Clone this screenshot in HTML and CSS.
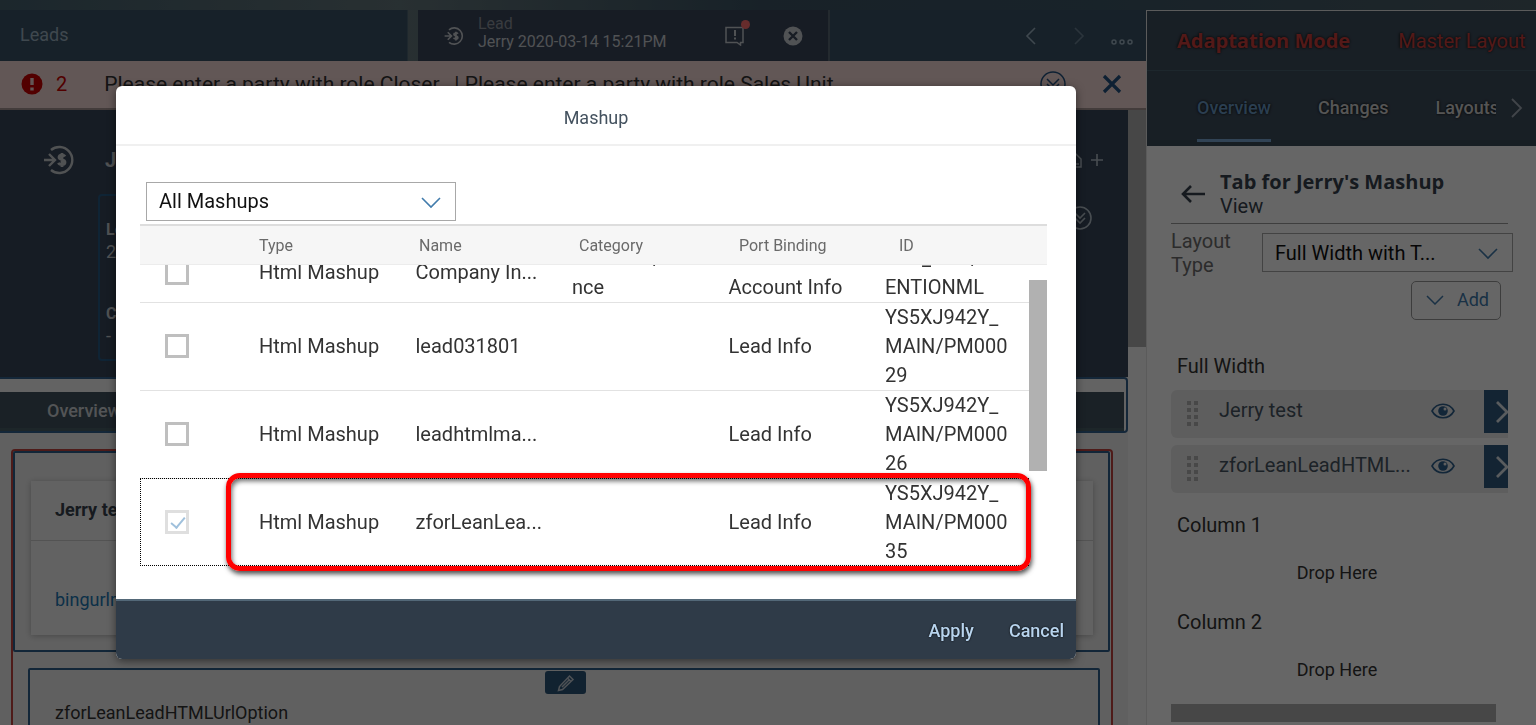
FILE: index.html
```html
<!DOCTYPE html>
<html lang="en">
<head>
  <meta charset="UTF-8" />
  <meta name="viewport" content="width=device-width, initial-scale=1.0" />
  <title>Lead - Mashup</title>
  <link rel="stylesheet" href="styles.css">
</head>
<body>
  <div class="app">
    <main class="main">
      <nav class="window-tabs">
        <a href="#" class="window-tab">Leads</a>
        <div class="window-tab active">
          <svg class="lead-icon" width="20" height="20" viewBox="0 0 32 32" fill="none" stroke="currentColor" stroke-width="2.600"><path d="M8 6a13 13 0 1 1 0 20M1 16h11M6 10l6 6-6 6"/><path d="M22 12.500c-1-2-6-2-6 .8 0 3 6 1.800 6 5 0 3-5.500 3-6.500.5M19 9v14" stroke-width="3"/></svg>
          <div class="tab-text">
            <span class="tab-kind">Lead</span>
            <span class="tab-name">Jerry 2020-03-14 15:21PM</span>
          </div>
          <button type="button" class="icon-btn message-btn" aria-label="Messages">
            <svg width="20" height="20" viewBox="0 0 20 20" fill="none" stroke="currentColor" stroke-width="1.500"><path d="M1 1.500h17v15h-2.500v2.500l-3.500-2.500H1z"/><path d="M10 4v6M10 11.500v2" stroke-width="2"/></svg>
            <span class="dot"></span>
          </button>
          <button type="button" class="icon-btn" aria-label="Close tab">
            <svg width="20" height="20" viewBox="0 0 20 20"><circle cx="10" cy="10" r="9.500" fill="currentColor"/><path d="M6 6l8 8M14 6l-8 8" stroke="#3a465a" stroke-width="2.400"/></svg>
          </button>
        </div>
        <div class="window-nav">
          <button type="button" class="icon-btn" aria-label="Previous">
            <svg width="12" height="18" viewBox="0 0 12 18" fill="none" stroke="currentColor" stroke-width="1.600"><path d="M10 1L2 9l8 8"/></svg>
          </button>
          <button type="button" class="icon-btn faded" aria-label="Next">
            <svg width="12" height="18" viewBox="0 0 12 18" fill="none" stroke="currentColor" stroke-width="1.600"><path d="M2 1l8 8-8 8"/></svg>
          </button>
          <button type="button" class="icon-btn more-btn" aria-label="More">
            <svg width="22" height="6" viewBox="0 0 22 6" fill="none" stroke="currentColor" stroke-width="1.500"><circle cx="3" cy="3" r="2"/><circle cx="11" cy="3" r="2"/><circle cx="19" cy="3" r="2"/></svg>
          </button>
        </div>
      </nav>

      <div class="error-bar">
        <svg width="22" height="22" viewBox="0 0 22 22"><circle cx="11" cy="11" r="10.500" fill="#cc0000"/><path d="M11 5v7M11 14.500v3" stroke="#f5dad7" stroke-width="3.400"/></svg>
        <span class="error-count">2</span>
        <span class="error-text">Please enter a party with role Closer.&nbsp; | Please enter a party with role Sales Unit</span>
        <button type="button" class="icon-btn" aria-label="Expand">
          <svg width="26" height="26" viewBox="0 0 26 26" fill="none" stroke="currentColor" stroke-width="1.500"><circle cx="13" cy="13" r="12"/><path d="M7 8l6 6 6-6M7 13l6 6 6-6"/></svg>
        </button>
        <button type="button" class="icon-btn" aria-label="Dismiss">
          <svg width="20" height="20" viewBox="0 0 20 20" stroke="currentColor" stroke-width="3.200"><path d="M2 2l16 16M18 2L2 18"/></svg>
        </button>
      </div>

      <div class="work-area">
        <div class="page">
          <section class="object-header">
            <div class="object-title">
              <svg width="32" height="32" viewBox="0 0 32 32" fill="none" stroke="currentColor" stroke-width="2.400"><path d="M8 6a13 13 0 1 1 0 20M1 16h11M6 10l6 6-6 6"/><path d="M22 12.500c-1-2-6-2-6 .8 0 3 6 1.800 6 5 0 3-5.500 3-6.500.5M19 9v14" stroke-width="2.800"/></svg>
              <h1>Jerry 2020-03-14 15:21PM</h1>
              <div class="object-actions">
                <svg width="18" height="18" viewBox="0 0 18 18" fill="none" stroke="currentColor" stroke-width="1.500"><path d="M3 16V8l6-6 6 6v8zM9 13h4"/></svg>
                <svg width="14" height="14" viewBox="0 0 14 14" stroke="currentColor" stroke-width="1.600"><path d="M7 1v12M1 7h12"/></svg>
              </div>
            </div>
            <div class="object-row">
              <dl class="facets">
                <dt>Lead ID</dt>
                <dd>2641</dd>
                <dt>Closer</dt>
                <dd>-</dd>
              </dl>
              <svg class="expand-icon" width="24" height="24" viewBox="0 0 24 24" fill="none" stroke="currentColor" stroke-width="1.600"><circle cx="12" cy="12" r="11"/><path d="M7 7l5 5 5-5M7 12l5 5 5-5"/></svg>
            </div>
          </section>

          <div class="section-nav">
            <a href="#">Overview</a>
          </div>

          <div class="tab-content">
            <div class="drop-zone">
              <article class="card">
                <h2>Jerry test</h2>
                <a href="#">bingurlmashup</a>
              </article>
            </div>
            <div class="drop-zone second">
              <button type="button" class="edit-btn" aria-label="Edit">
                <svg width="18" height="18" viewBox="0 0 18 18" fill="none" stroke="currentColor" stroke-width="1.500"><path d="M1.500 16.500l1-4L12.500 2l3.500 3.500L5.500 15.500zM10.500 4l3.500 3.500M5 13l7-7"/></svg>
              </button>
              <p>zforLeanLeadHTMLUrlOption</p>
            </div>
          </div>
        </div>
        <div class="page-scroll"><div class="page-thumb"></div></div>
      </div>
    </main>

    <aside class="panel">
      <div class="panel-mode">
        <strong>Adaptation Mode</strong>
        <span>Master Layout</span>
      </div>
      <nav class="panel-tabs">
        <a href="#" class="selected">Overview</a>
        <a href="#">Changes</a>
        <a href="#" class="cut">Layouts</a>
        <svg width="12" height="20" viewBox="0 0 12 20" fill="none" stroke="currentColor" stroke-width="1.800"><path d="M1 1l9 9-9 9"/></svg>
      </nav>
      <div class="panel-body">
        <div class="panel-title">
          <svg width="24" height="20" viewBox="0 0 24 20" fill="none" stroke="currentColor" stroke-width="2.600"><path d="M10 2l-8 8 8 8M2 10h22"/></svg>
          <div>
            <h2>Tab for Jerry's Mashup</h2>
            <p>View</p>
          </div>
        </div>
        <div class="layout-type">
          <label for="layoutType">Layout Type</label>
          <div class="select">
            <select id="layoutType"><option>Full Width with T...</option></select>
            <svg width="20" height="12" viewBox="0 0 20 12" fill="none" stroke="currentColor" stroke-width="1.600"><path d="M1 1l9 9 9-9"/></svg>
          </div>
        </div>
        <button type="button" class="add-btn">
          <svg width="18" height="10" viewBox="0 0 18 10" fill="none" stroke="currentColor" stroke-width="1.500"><path d="M1 1l8 8 8-8"/></svg>
          Add
        </button>

        <h3>Full Width</h3>
        <div class="item">
          <svg class="grip" width="12" height="26" viewBox="0 0 12 26" fill="currentColor"><path d="M0 0h4v4H0zM7 0h4v4H7zM0 7h4v4H0zM7 7h4v4H7zM0 14h4v4H0zM7 14h4v4H7zM0 21h4v4H0zM7 21h4v4H7z"/></svg>
          <span>Jerry test</span>
          <svg class="eye" width="24" height="16" viewBox="0 0 24 16"><path d="M1 8c5-9 17-9 22 0-5 9-17 9-22 0z" fill="none" stroke="currentColor" stroke-width="1.600"/><circle cx="12" cy="8" r="4.800" fill="currentColor"/><circle cx="14" cy="6" r="1.500" fill="#ebebeb"/></svg>
          <button type="button" class="item-go" aria-label="Open Jerry test">
            <svg width="12" height="22" viewBox="0 0 12 22" fill="none" stroke="currentColor" stroke-width="2.800"><path d="M1 1l10 10L1 21"/></svg>
          </button>
        </div>
        <div class="item">
          <svg class="grip" width="12" height="26" viewBox="0 0 12 26" fill="currentColor"><path d="M0 0h4v4H0zM7 0h4v4H7zM0 7h4v4H0zM7 7h4v4H7zM0 14h4v4H0zM7 14h4v4H7zM0 21h4v4H0zM7 21h4v4H7z"/></svg>
          <span>zforLeanLeadHTML...</span>
          <svg class="eye" width="24" height="16" viewBox="0 0 24 16"><path d="M1 8c5-9 17-9 22 0-5 9-17 9-22 0z" fill="none" stroke="currentColor" stroke-width="1.600"/><circle cx="12" cy="8" r="4.800" fill="currentColor"/><circle cx="14" cy="6" r="1.500" fill="#ebebeb"/></svg>
          <button type="button" class="item-go" aria-label="Open zforLeanLeadHTML">
            <svg width="12" height="22" viewBox="0 0 12 22" fill="none" stroke="currentColor" stroke-width="2.800"><path d="M1 1l10 10L1 21"/></svg>
          </button>
        </div>
        <h3>Column 1</h3>
        <p class="drop-here">Drop Here</p>
        <h3>Column 2</h3>
        <p class="drop-here">Drop Here</p>
        <div class="panel-scroll"></div>
      </div>
    </aside>
  </div>

  <div class="backdrop"></div>

  <div class="dialog" role="dialog" aria-labelledby="dialogTitle">
    <h2 class="dialog-title" id="dialogTitle">Mashup</h2>
    <div class="dialog-body">
      <div class="select mashup-filter">
        <select id="mashupFilter" aria-label="Mashup filter"><option>All Mashups</option></select>
        <svg width="20" height="12" viewBox="0 0 20 12" fill="none" stroke="currentColor" stroke-width="1.600"><path d="M1 1l9 9 9-9"/></svg>
      </div>
      <table class="head-table">
        <thead>
          <tr>
            <th class="col-check"></th>
            <th>Type</th>
            <th>Name</th>
            <th>Category</th>
            <th>Port Binding</th>
            <th class="col-id">ID</th>
          </tr>
        </thead>
      </table>
      <div class="rows">
        <div class="rows-view">
          <table class="body-table">
            <colgroup>
              <col class="col-check"><col><col><col><col><col class="col-id">
            </colgroup>
            <tbody>
              <tr>
                <td><input type="checkbox" aria-label="Company In..."></td>
                <td>Html Mashup</td>
                <td>Company In...</td>
                <td>Business/Finance</td>
                <td>Avention Account Info</td>
                <td>BYD_COD/AVENTIONML</td>
              </tr>
              <tr>
                <td><input type="checkbox" aria-label="lead031801"></td>
                <td>Html Mashup</td>
                <td>lead031801</td>
                <td></td>
                <td>Lead Info</td>
                <td>YS5XJ942Y_MAIN/PM00029</td>
              </tr>
              <tr>
                <td><input type="checkbox" aria-label="leadhtmlma..."></td>
                <td>Html Mashup</td>
                <td>leadhtmlma...</td>
                <td></td>
                <td>Lead Info</td>
                <td>YS5XJ942Y_MAIN/PM00026</td>
              </tr>
              <tr class="focused">
                <td><input type="checkbox" aria-label="zforLeanLea..." checked disabled></td>
                <td>Html Mashup</td>
                <td>zforLeanLea...</td>
                <td></td>
                <td>Lead Info</td>
                <td>YS5XJ942Y_MAIN/PM00035</td>
              </tr>
            </tbody>
          </table>
        </div>
        <div class="rows-scroll"><div class="rows-thumb"></div></div>
        <div class="marker"></div>
      </div>
    </div>
    <div class="dialog-footer">
      <button type="button">Apply</button>
      <button type="button">Cancel</button>
    </div>
  </div>
</body>
</html>
```
FILE: styles.css
```css
* { box-sizing: border-box; }
body {
  margin: 0; height: 100vh; overflow: hidden; position: relative;
  font-family: Roboto, "Liberation Sans", sans-serif; font-size: 20px; line-height: 24px; color: #333;
}
h1, h2, h3, p, dl, dd { margin: 0; }
a { text-decoration: none; color: inherit; }
button, select { font: inherit; color: inherit; }
svg { display: block; flex: none; }

.app {
  display: grid; grid-template-columns: 1fr 390px; height: 100%; padding-top: 10px;
  background: linear-gradient(90deg, #46616f 0, #65787d 400px, #3c5464 760px, #3e5768 1100px, #4c5f68 100%);
}
.main { display: flex; flex-direction: column; min-width: 0; min-height: 0; }
.icon-btn { position: relative; border: 0; padding: 0; background: none; cursor: pointer; }

/* window tabs */
.window-tabs { display: flex; height: 51px; flex: none; color: #9fb4c4; }
.window-tab { display: flex; align-items: center; width: 408px; padding: 0 0 2px 20px; font-size: 18px; background: #3a5367; border-right: 1px solid #4d6573; }
.window-tab.active {
  width: 412px; margin-left: 10px; padding: 0 25px 0 26px; background: #3a465a; color: #c8ccd2; border-right: 2px solid #5b6a76;
}
.tab-text { display: flex; flex-direction: column; margin: 0 0 5px 14px; flex: 1; font-size: 16px; line-height: 18px; }
.tab-kind { color: #8e959e; }
.message-btn { margin-right: 38px; }
.dot { position: absolute; top: -6px; right: -5px; width: 9px; height: 9px; border-radius: 50%; background: #ff6f6f; }
.window-nav { flex: 1; display: flex; align-items: center; justify-content: flex-end; padding-right: 13px; gap: 36px; background: #3a5367; }
.window-nav .more-btn { margin: 12px 0 0 -10px; }
.faded { opacity: 0.5; }

/* error bar */
.error-bar {
  display: flex; align-items: center; flex: none; height: 49px; padding: 0 24px 1px 21px;
  background: #f5dad7; border-bottom: 2px solid #a99694; color: #23527f;
}
.error-count { margin-left: 13px; color: #cc0000; }
.error-text { flex: 1; margin-left: 37px; font-size: 21px; color: #333; white-space: nowrap; }
.error-bar .icon-btn + .icon-btn { margin-left: 36px; }

/* page */
.work-area { display: flex; flex: 1; min-height: 0; }
.page { flex: 1; min-width: 0; overflow: hidden; background: #f0f0f0; }
.page-scroll { width: 18px; background: #fafafa; }
.page-thumb { height: 237px; background: #b2b2b2; }
.object-header { height: 267px; padding: 34px 24px 0 43px; background: #38465a; color: #c8ccd0; }
.object-title { display: flex; align-items: center; height: 32px; }
.object-title h1 { flex: 1; margin-left: 30px; font-size: 20px; }
.object-actions { display: flex; align-items: center; gap: 6px; color: #b4c0ca; }
.object-row { display: flex; justify-content: space-between; padding: 18px 12px 0 55px; }
.facets {
  width: 400px; height: 167px; padding: 23px 6px; border: 2px solid #275a85; border-radius: 4px;
  font-size: 18px; line-height: 22px;
}
.facets dt { font-size: 16px; font-weight: bold; }
.facets dd + dt { margin-top: 40px; }
.expand-icon { margin-top: 12px; color: #b4c0ca; }
.section-nav {
  padding: 13px 2px 0 0; background: #f8f8f8; border: 2px solid #33628e; border-left: 0; border-radius: 0 4px 4px 0;
  font-size: 18px; font-weight: 500; color: #cfd3d6;
}
.section-nav a { display: block; height: 39px; padding: 7px 47px 0; background: #41535f; border-bottom: 3px solid #4a5f66; }
.tab-content { height: 500px; margin: 16px 15px 0 11px; border: 2px solid #c4453f; border-radius: 4px; }
.drop-zone { margin-right: 1px; height: 201px; padding: 28px 15px 0 16px; border: 2px solid #2e5f8c; border-radius: 2px; }
.card { height: 154px; background: #f4f4f4; box-shadow: 0 1px 6px rgba(0,0,0,0.25); font-size: 18px; color: #1d78b5; }
.card h2 { height: 60px; padding: 17px 24px; border-bottom: 1px solid #d0d0d0; font-size: 18px; color: #38434e; }
.card a { display: block; padding: 47px 24px; }
.drop-zone.second { display: flex; flex-direction: column; margin: 16px 11px 0 15px; padding: 1px 25px; height: 240px; font-size: 18px; }
.edit-btn { display: grid; place-items: center; align-self: center; width: 41px; height: 23px; margin-left: 3px; padding: 0; border: 0; border-radius: 3px; background: #2c5578; color: #c3cdd6; }
.second p { margin-top: 7px; }

/* adaptation panel */
.panel { min-width: 0; overflow: hidden; background: #fff; border: solid #e4e4e4; border-width: 1px 0 0 1px; }
.panel-mode { display: flex; gap: 48px; height: 60px; padding: 18px 0 0 30px; background: #3e4e5d; border-bottom: 1px solid #4a6270; color: #d0403c; white-space: nowrap; text-shadow: 0 0 3px #000; }
.panel-mode strong, .panel-title h2 { font-family: "Open Sans", "Noto Sans", sans-serif; font-size: 20px; font-weight: 700; }
.panel-tabs {
  display: flex; align-items: center; height: 75px; padding: 0 0 0 50px; background: #3e4e5d; border-bottom: 6px solid #3a4b58;
  font-size: 18px; font-weight: 500; color: #d5d5d5; text-shadow: 0 0 3px #000;
}
.panel-tabs a { margin-right: 47px; padding: 27px 0 19px; border-bottom: 3px solid transparent; }
.panel-tabs .selected { border-bottom-color: #7ca8d4; color: #6b9cc9; }
.panel-tabs .cut { width: 60px; margin-right: 15px; overflow: hidden; }
.panel-tabs svg { margin-top: 4px; color: #a3adb8; }
.panel-body { padding: 24px 28px 0 24px; }
.panel-title { display: flex; align-items: center; gap: 15px; height: 54px; padding: 0 0 5px 10px; border-bottom: 1px solid #9b9b9b; color: #38434e; }
.layout-type { display: flex; justify-content: space-between; align-items: flex-start; margin-right: -5px; padding-top: 5px; color: #6e6e6e; }
.layout-type label { width: 80px; }
.select { position: relative; width: 251px; height: 39px; margin-top: 4px; color: #427cac; }
.select select { width: 100%; height: 100%; padding: 0 12px; appearance: none; background: transparent; border: 1px solid #a8a8a8; border-radius: 0; color: #111; }
.select svg { position: absolute; right: 15px; top: 15px; pointer-events: none; }
.add-btn {
  display: flex; align-items: center; justify-content: space-between; width: 90px; height: 39px; margin: 4px 7px 0 auto; padding: 0 11px 2px 14px;
  background: none; border: 1px solid #9a9a9a; border-radius: 5px; color: #427cac; font-size: 18px;
}
.panel-body h3 { margin: 20px 6px 24px; font-size: 20px; font-weight: 400; }
.panel-body .add-btn + h3 { margin: 34px 6px 12px; }
.item { display: flex; align-items: center; height: 48px; margin-bottom: 7px; padding-left: 16px; background: #ebebeb; border-radius: 6px 0 0 6px; color: #485562; }
.item span { flex: 1; margin: 0 0 8px 20px; white-space: nowrap; }
.grip { color: #b5b5b5; }
.eye { margin: 0 29px 6px 0; color: #2f608d; }
.item-go { align-self: flex-start; width: 24px; height: 43px; padding: 0 0 0 12px; border: 0; background: #305a81; color: #dfe5ea; }
.drop-here { text-align: center; font-size: 18px; margin: 0 5px 25px 0; }
.panel-body .drop-here + h3 { margin-top: 0; }
.panel-scroll { height: 18px; margin: -3px 12px 0 0; background: #b2b2b2; }

.backdrop { position: fixed; inset: 0; background: rgba(0,0,0,0.6); }

/* mashup dialog */
.dialog {
  position: absolute; left: 116px; top: 86px; width: 960px; display: flex; flex-direction: column;
  background: #fff; border-radius: 6px; overflow: hidden; box-shadow: 0 2px 8px rgba(0,0,0,0.5);
}
.dialog-title { height: 60px; padding: 20px 0; border-bottom: 2px solid #f0f0f0; text-align: center; font-size: 18px; font-weight: 400; color: #44525f; }
.dialog-body { padding: 36px 29px 33px 24px; }
.mashup-filter { width: 310px; margin: 0 0 3px 6px; }
.mashup-filter select { padding-bottom: 2px; }
table { border-collapse: collapse; table-layout: fixed; width: 100%; }
.col-check { width: 119px; }
.head-table { border-top: 2px solid #ddd; border-bottom: 1px solid #ececec; background: #f6f6f6; }
.head-table th { height: 39px; padding: 2px 0 0; text-align: left; font-size: 16px; font-weight: 400; color: #6a6a6a; }
.head-table .col-id { width: 148px; }
.rows { position: relative; display: flex; }
.rows-view { flex: 1; height: 301px; overflow: hidden; }
/* list is scrolled a little, first row sits partly under the header */
.body-table { margin-top: -22px; }
.body-table .col-id { width: 144px; }
.body-table td { height: 59px; padding: 0 28px 0 0; line-height: 29px; border-top: 1px solid #e2e2e2; overflow-wrap: anywhere; }
.body-table td:nth-child(2), .body-table td:nth-child(3) { padding-right: 0; white-space: nowrap; }
.body-table td:last-child { padding-right: 18px; word-break: break-all; }
.body-table .focused { outline: 1px dotted #000; outline-offset: -1px; }
.body-table input { display: block; appearance: none; width: 24px; height: 24px; margin: 0 0 0 25px; border: 3px solid #bfbfbf; background: #fff; }
.body-table input:checked { position: relative; border-color: #dfdfdf; }
.body-table input:checked::after {
  content: ""; position: absolute; left: 6px; top: 1px; width: 6px; height: 12px;
  border: solid #9fc0dc; border-width: 0 2px 2px 0; transform: rotate(40deg);
}
.rows-scroll { width: 18px; padding-top: 15px; }
.rows-thumb { height: 191px; background: #b1b1b1; }
.marker { position: absolute; left: 86px; right: 16px; bottom: -5px; height: 98px; border: 5px solid #f00; border-radius: 14px; box-shadow: 1px 3px 5px rgba(0,0,0,0.7), inset 1px 3px 5px rgba(0,0,0,0.6); }
.dialog-footer { display: flex; justify-content: flex-end; gap: 35px; height: 60px; padding: 2px 12px 0; background: #2f3b48; border-top: 2px solid #536878; }
.dialog-footer button { padding: 0; border: 0; background: none; font-size: 18px; font-weight: 500; color: #b8d4ee; text-shadow: 0 0 2px #000; cursor: pointer; }
```
